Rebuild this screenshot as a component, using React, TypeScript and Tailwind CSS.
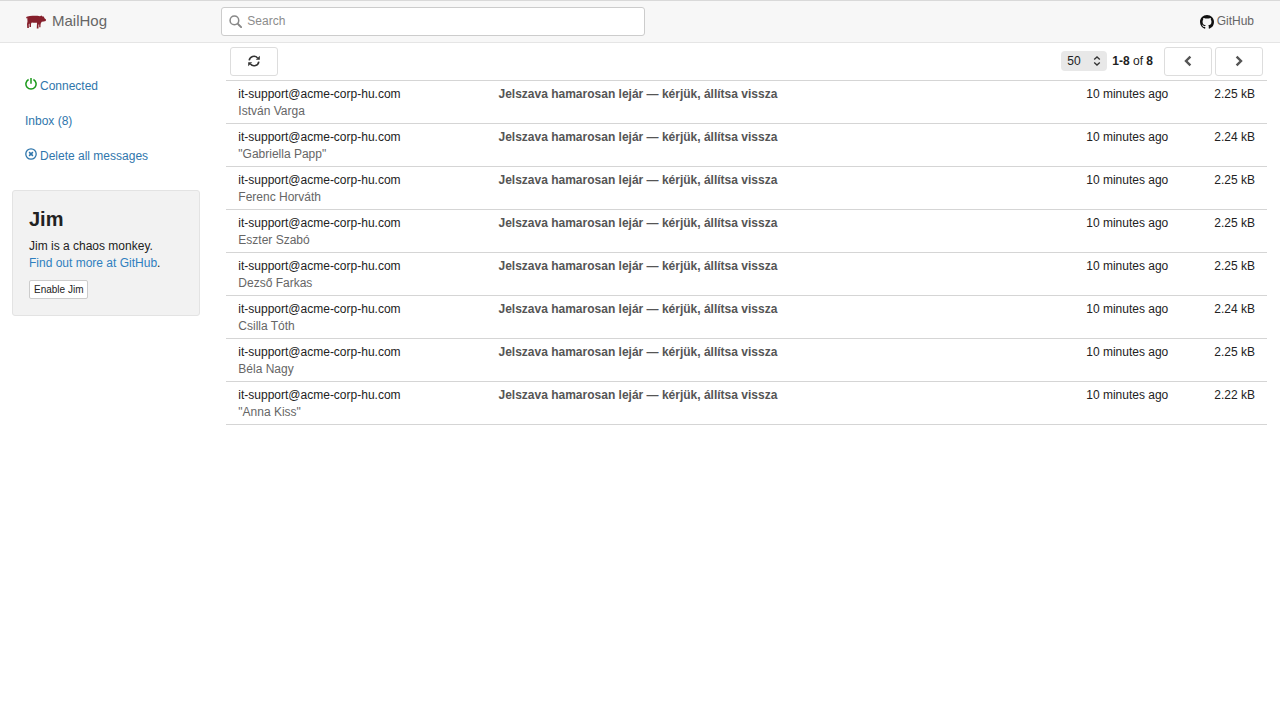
import React from 'react';

type Message = { from: string; to: string; size: string };

const SUBJECT = 'Jelszava hamarosan lejár — kérjük, állítsa vissza';

const messages: Message[] = [
  { from: 'it-support@acme-corp-hu.com', to: 'István Varga', size: '2.25 kB' },
  { from: 'it-support@acme-corp-hu.com', to: '"Gabriella Papp"', size: '2.24 kB' },
  { from: 'it-support@acme-corp-hu.com', to: 'Ferenc Horváth', size: '2.25 kB' },
  { from: 'it-support@acme-corp-hu.com', to: 'Eszter Szabó', size: '2.25 kB' },
  { from: 'it-support@acme-corp-hu.com', to: 'Dezső Farkas', size: '2.25 kB' },
  { from: 'it-support@acme-corp-hu.com', to: 'Csilla Tóth', size: '2.24 kB' },
  { from: 'it-support@acme-corp-hu.com', to: 'Béla Nagy', size: '2.25 kB' },
  { from: 'it-support@acme-corp-hu.com', to: '"Anna Kiss"', size: '2.22 kB' },
];

function HogLogo() {
  return (
    <svg viewBox="0 0 40 28" className="mt-0.5 h-[14px] w-5" fill="#86202c" aria-hidden="true">
      <path d="M0.5 4 L3 3.2 C7 1.5 12 1.2 17 1.6 C21 1.8 25 1.4 28 2.4 L31 0.8 L33 3 L35.5 3 L37 6.5 L40 9 L39.5 12 L35.5 13 L31.5 13.6 L29.5 17 L29 20 L29 24.5 L26.5 24.5 L26.3 19 L25 19 L25 27 L21.5 27 L22 15.5 C18 16 14.5 15.5 11.5 15 L10 17.5 L10 24 L7 24 L7 17 L5.5 18.5 L5.8 26 L2.5 26 L2 18 L3 13 L2.6 7 L2.2 5.5 L0.5 7.5 Z" />
    </svg>
  );
}

function GitHubMark() {
  return (
    <svg viewBox="0 0 16 16" className="mt-0.5 size-[14px]" fill="#111" aria-hidden="true">
      <path d="M8 0C3.58 0 0 3.58 0 8c0 3.54 2.29 6.53 5.47 7.59.4.07.55-.17.55-.38 0-.19-.01-.82-.01-1.49-2.01.37-2.53-.49-2.69-.94-.09-.23-.48-.94-.82-1.13-.28-.15-.68-.52-.01-.53.63-.01 1.08.58 1.23.82.72 1.21 1.87.87 2.33.66.07-.52.28-.87.51-1.07-1.78-.2-3.64-.89-3.64-3.95 0-.87.31-1.59.82-2.15-.08-.2-.36-1.02.08-2.12 0 0 .67-.21 2.2.82.64-.18 1.32-.27 2-.27s1.36.09 2 .27c1.53-1.04 2.2-.82 2.2-.82.44 1.1.16 1.92.08 2.12.51.56.82 1.27.82 2.15 0 3.07-1.87 3.75-3.65 3.95.29.25.54.73.54 1.48 0 1.07-.01 1.93-.01 2.2 0 .21.15.46.55.38A8.01 8.01 0 0 0 16 8c0-4.42-3.58-8-8-8z" />
    </svg>
  );
}

function SearchIcon() {
  return (
    <svg viewBox="0 0 12 12" className="absolute top-2 left-2 size-[13px]" fill="none" stroke="#888" aria-hidden="true">
      <circle cx="5" cy="5" r="4" strokeWidth="1.4" />
      <path d="M8 8l3.2 3.2" strokeWidth="1.8" strokeLinecap="round" />
    </svg>
  );
}

function RefreshIcon() {
  return (
    <svg viewBox="0 0 12 12" className="size-3" fill="none" stroke="#333" strokeWidth="1.6" aria-hidden="true">
      <path d="M1.2 5.4A4.8 4.8 0 0 1 9.6 2.9" />
      <path d="M10.8 6.6A4.8 4.8 0 0 1 2.4 9.1" />
      <path d="M11.8 0.8V4.8H7.8Z" fill="#333" stroke="none" />
      <path d="M0.2 11.2V7.2H4.2Z" fill="#333" stroke="none" />
    </svg>
  );
}

function PowerIcon() {
  return (
    <svg viewBox="0 0 12 12" className="size-3" fill="none" stroke="#1c9a1c" strokeWidth="1.5" aria-hidden="true">
      <path d="M3.6 1.5A5.1 5.1 0 1 0 8.4 1.5" />
      <path d="M6 0v5.8" />
    </svg>
  );
}

function RemoveCircleIcon() {
  return (
    <svg viewBox="0 0 12 12" className="size-3" fill="none" stroke="#2f76ac" aria-hidden="true">
      <circle cx="6" cy="6" r="5.2" strokeWidth="1.3" />
      <path d="M4.1 4.1l3.8 3.8M7.9 4.1L4.1 7.9" strokeWidth="1.5" />
    </svg>
  );
}

function Chevron({ direction }: { direction: 'left' | 'right' }) {
  return (
    <svg viewBox="0 0 12 12" className="size-3" fill="none" stroke="#555" strokeWidth="2.4" aria-hidden="true">
      <path d={direction === 'left' ? 'M8.4 1.6L4 6l4.4 4.4' : 'M3.6 1.6L8 6l-4.4 4.4'} />
    </svg>
  );
}

function Header() {
  return (
    <header className="flex h-[43px] items-start border-t border-b border-t-[#d9d9d9] border-b-[#e5e5e5] bg-[#f7f7f7] pt-1.5">
      <div className="w-1/6 shrink-0 pt-1 pl-[26px]">
        <a href="#" className="flex items-center gap-1.5 text-[15px] leading-5 text-[#666]">
          <HogLogo />
          MailHog
        </a>
      </div>
      <div className="w-[34.67%] pr-3 pl-2">
        <div className="relative">
          <SearchIcon />
          <input
            type="text"
            aria-label="Search"
            placeholder="Search"
            className="block h-[29px] w-full rounded-[3px] border border-[#ccc] bg-white pr-2 pb-0.5 pl-[25px] text-[12px] text-[#555] placeholder:text-[#8c8c8c] outline-none"
          />
        </div>
      </div>
      <a href="#" className="mt-1.5 mr-[26px] ml-auto flex items-center gap-[3px] text-[12px] leading-4 text-[#666]">
        <GitHubMark />
        GitHub
      </a>
    </header>
  );
}

function Sidebar() {
  return (
    <aside className="w-1/6 shrink-0 pt-[35px] pr-[13px] pl-3">
      <nav className="flex flex-col gap-[18px] pl-[13px] text-[12px] leading-[17px] text-[#2f76ac]">
        <a href="#" className="flex items-start gap-[3px]">
          <PowerIcon />
          Connected
        </a>
        <a href="#">Inbox (8)</a>
        <a href="#" className="flex items-start gap-[3px]">
          <RemoveCircleIcon />
          Delete all messages
        </a>
      </nav>
      <section className="mt-[25px] rounded-[3px] border border-[#e3e3e3] bg-[#f2f2f2] px-4 py-4">
        <h2 className="text-[20px] leading-6 font-bold text-[#222]">Jim</h2>
        <p className="mt-[7px] text-[12px] leading-[17px] text-[#222]">
          Jim is a chaos monkey.
          <br />
          <a href="#" className="text-[#2f7fbf]">Find out more at GitHub</a>.
        </p>
        <button type="button" className="mt-2 block h-[19px] rounded-[2px] border border-[#ccc] bg-white px-1 text-[10px] leading-4 text-[#222]">
          Enable Jim
        </button>
      </section>
    </aside>
  );
}

function Toolbar() {
  const button = 'flex h-[29px] w-12 items-center justify-center rounded-[3px] border border-[#ddd] bg-white pb-px';
  return (
    <div className="flex h-[37px] items-start px-1 pt-1">
      <button type="button" aria-label="Refresh" className={button}>
        <RefreshIcon />
      </button>
      <div className="ml-auto flex items-start text-[12px] leading-5 text-[#222]">
        <div className="relative mt-1">
          <select
            aria-label="Messages per page"
            defaultValue="50"
            className="block h-5 w-[46px] appearance-none rounded-[4px] bg-[#e8e8e8] pl-1.5 text-[12px] leading-5"
          >
            <option>25</option>
            <option>50</option>
            <option>100</option>
          </select>
          <svg viewBox="0 0 8 10" className="pointer-events-none absolute top-[5px] right-1.5 h-2.5 w-2" fill="none" stroke="#333" strokeWidth="1.3" aria-hidden="true">
            <path d="M1.2 3.6L4 1l2.8 2.6M1.2 6.4L4 9l2.8-2.6" />
          </svg>
        </div>
        <span className="mt-1 mr-[11px] ml-[5px]">
          <b>1-8</b> of <b>8</b>
        </span>
        <div className="flex gap-[3px]">
          <button type="button" aria-label="Previous page" className={button}>
            <Chevron direction="left" />
          </button>
          <button type="button" aria-label="Next page" className={button}>
            <Chevron direction="right" />
          </button>
        </div>
      </div>
    </div>
  );
}

function MessageTable() {
  return (
    <table className="w-full table-fixed border-separate border-spacing-0 border-t border-[#d5d5d5] text-[12px] leading-[17px] text-[#222]">
      <colgroup>
        <col className="w-1/4" />
        <col />
        <col className="w-1/6" />
        <col className="w-1/12" />
      </colgroup>
      <tbody>
        {messages.map((m) => (
          <tr key={m.to} className="align-top [&>td]:border-b [&>td]:border-[#d5d5d5] [&>td]:px-3 [&>td]:pt-[5px] [&>td]:pb-[3px]">
            <td>
              {m.from}
              <div className="text-[#666]">{m.to}</div>
            </td>
            <td className="font-bold text-[#555]">{SUBJECT}</td>
            <td className="text-right">10 minutes ago</td>
            <td className="text-right whitespace-nowrap">{m.size}</td>
          </tr>
        ))}
      </tbody>
    </table>
  );
}

export default function App() {
  return (
    <div className="min-h-screen bg-white font-['Liberation_Sans',Arial,sans-serif]">
      <Header />
      <div className="flex">
        <Sidebar />
        <main className="min-w-0 flex-1 px-[13px]">
          <Toolbar />
          <MessageTable />
        </main>
      </div>
    </div>
  );
}
